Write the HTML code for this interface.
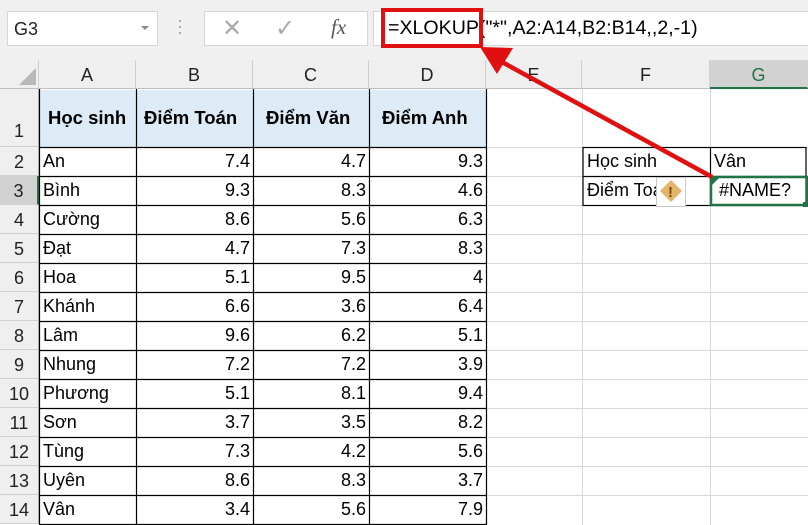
<!DOCTYPE html>
<html><head><meta charset="utf-8"><style>
body{margin:0;width:808px;height:525px;overflow:hidden;background:#fff;font-family:"Liberation Sans",sans-serif;position:relative}
div{position:absolute;box-sizing:border-box}
.t{white-space:nowrap;font-size:18px;color:#000}
.ch{top:60px;height:29px;background:#efefef;border-right:1px solid #d0d0d0;border-bottom:1px solid #bdbdbd;text-align:center;font-size:18px;line-height:30px;color:#222}
.rh{left:0;width:39px;background:#efefef;border-bottom:1px solid #d0d0d0;border-right:1px solid #bdbdbd;text-align:center;font-size:18px;color:#222}
</style></head><body>
<div style="left:0;top:0;width:808px;height:60px;background:#f0f0f0"></div>
<div style="left:7px;top:11px;width:151px;height:35px;background:#fff;border:1px solid #d6d6d6"></div>
<div class="t" style="left:14px;top:19px;color:#222">G3</div>
<div style="left:141px;top:26px;border-left:4px solid transparent;border-right:4px solid transparent;border-top:4px solid #888"></div>
<div style="left:179px;top:20px;width:2px;height:2px;background:#aaa;box-shadow:0 6px #aaa,0 12px #aaa"></div>
<div style="left:204px;top:11px;width:164px;height:35px;background:#fff;border:1px solid #d6d6d6"></div>
<div class="t" style="left:222px;top:14px;font-size:24px;color:#aaa">✕</div>
<div class="t" style="left:275px;top:14px;font-size:24px;color:#aaa">✓</div>
<div class="t" style="left:331px;top:15px;font-family:'Liberation Serif',serif;font-style:italic;font-size:21px;color:#555">fx</div>
<div style="left:373px;top:11px;width:435px;height:35px;background:#fff;border:1px solid #d6d6d6;border-right:none"></div>
<div class="t" style="left:388px;top:17px;font-size:19.6px">=XLOKUP("*",A2:A14,B2:B14,,2,-1)</div>
<div style="left:381px;top:8px;width:102px;height:40px;border:4px solid #e01010"></div>

<div class="ch" style="left:0;width:39px"></div>
<div style="left:19px;top:68px;border-left:17px solid transparent;border-bottom:17px solid #b8b8b8"></div>
<div class="ch" style="left:39px;width:97px">A</div>
<div class="ch" style="left:136px;width:117px">B</div>
<div class="ch" style="left:253px;width:116px">C</div>
<div class="ch" style="left:369px;width:117px">D</div>
<div class="ch" style="left:486px;width:96px">E</div>
<div class="ch" style="left:582px;width:128px">F</div>
<div class="ch" style="left:710px;width:98px;background:#d2d2d2;border-bottom:2px solid #217346;color:#217346">G</div>

<div class="rh" style="top:89px;height:58px;line-height:84px">1</div>
<div id="rows"></div>

<svg style="position:absolute;left:0;top:0" width="808" height="525">
<g stroke="#d9d9d9" stroke-width="1">
<line x1="582.5" y1="89" x2="582.5" y2="525"/><line x1="710.5" y1="89" x2="710.5" y2="525"/>
<line x1="486" y1="147.5" x2="808" y2="147.5"/>
<line x1="486" y1="176.5" x2="808" y2="176.5"/><line x1="486" y1="205.5" x2="808" y2="205.5"/>
<line x1="486" y1="234.5" x2="808" y2="234.5"/><line x1="486" y1="263.5" x2="808" y2="263.5"/>
<line x1="486" y1="292.5" x2="808" y2="292.5"/><line x1="486" y1="321.5" x2="808" y2="321.5"/>
<line x1="486" y1="350.5" x2="808" y2="350.5"/><line x1="486" y1="379.5" x2="808" y2="379.5"/>
<line x1="486" y1="408.5" x2="808" y2="408.5"/><line x1="486" y1="437.5" x2="808" y2="437.5"/>
<line x1="486" y1="466.5" x2="808" y2="466.5"/><line x1="486" y1="495.5" x2="808" y2="495.5"/>
</g>
<rect x="40" y="90" width="446" height="57" fill="#ddebf7"/>
<g stroke="#000" stroke-width="1.2">
<line x1="39.5" y1="89" x2="39.5" y2="525"/><line x1="136.5" y1="89" x2="136.5" y2="525"/>
<line x1="253.5" y1="89" x2="253.5" y2="525"/><line x1="369.5" y1="89" x2="369.5" y2="525"/>
<line x1="486.5" y1="89" x2="486.5" y2="525"/>
<line x1="39" y1="147.5" x2="486" y2="147.5"/><line x1="39" y1="176.5" x2="486" y2="176.5"/>
<line x1="39" y1="205.5" x2="486" y2="205.5"/><line x1="39" y1="234.5" x2="486" y2="234.5"/>
<line x1="39" y1="263.5" x2="486" y2="263.5"/><line x1="39" y1="292.5" x2="486" y2="292.5"/>
<line x1="39" y1="321.5" x2="486" y2="321.5"/><line x1="39" y1="350.5" x2="486" y2="350.5"/>
<line x1="39" y1="379.5" x2="486" y2="379.5"/><line x1="39" y1="408.5" x2="486" y2="408.5"/>
<line x1="39" y1="437.5" x2="486" y2="437.5"/><line x1="39" y1="466.5" x2="486" y2="466.5"/>
<line x1="39" y1="495.5" x2="486" y2="495.5"/><line x1="39" y1="524.5" x2="486" y2="524.5"/>
<rect x="583" y="147.5" width="223" height="58" fill="none"/>
<line x1="583" y1="176.5" x2="806" y2="176.5"/><line x1="710.5" y1="147" x2="710.5" y2="206"/>
</g>
<rect x="711" y="177" width="96" height="28" fill="none" stroke="#217346" stroke-width="2.5"/>
<rect x="803" y="202" width="5" height="5" fill="#217346"/>
<polygon points="712,178 719,178 712,185" fill="#217346"/>
<rect x="656.5" y="177.5" width="29" height="29" fill="#fff" stroke="#c8c8c8"/>
<polygon points="671,180 682,191 671,202 660,191" fill="#e3b46a"/>
<text x="668" y="197" font-family="Liberation Sans" font-weight="bold" font-size="15" fill="#7a4a10">!</text>
<line x1="712" y1="177" x2="502" y2="62" stroke="#e01010" stroke-width="4.5"/>
<polygon points="480,47 513,48 497,74" fill="#e01010"/>
</svg>

<div class="t" style="left:48px;top:107px;font-weight:bold;font-size:18.5px">Học sinh</div>
<div class="t" style="left:144px;top:107px;font-weight:bold;font-size:18.5px">Điểm Toán</div>
<div class="t" style="left:266px;top:107px;font-weight:bold;font-size:18.5px">Điểm Văn</div>
<div class="t" style="left:382px;top:107px;font-weight:bold;font-size:18.5px">Điểm Anh</div>

<div class="t" style="left:587px;top:151px">Học sinh</div>
<div class="t" style="left:714px;top:151px">Vân</div>
<div class="t" style="left:587px;top:180px;width:69px;overflow:hidden">Điểm Toán</div>
<div class="t" style="left:719px;top:180px">#NAME?</div>

<script>
var d=[["An",7.4,4.7,9.3],["Bình",9.3,8.3,4.6],["Cường",8.6,5.6,6.3],["Đạt",4.7,7.3,8.3],["Hoa",5.1,9.5,4],["Khánh",6.6,3.6,6.4],["Lâm",9.6,6.2,5.1],["Nhung",7.2,7.2,3.9],["Phương",5.1,8.1,9.4],["Sơn",3.7,3.5,8.2],["Tùng",7.3,4.2,5.6],["Uyên",8.6,8.3,3.7],["Vân",3.4,5.6,7.9]];
var h="";
for(var i=0;i<13;i++){var y=147+i*29;
var sel=(i==1);
h+='<div class="rh" style="top:'+y+'px;height:29px;line-height:30px;'+(sel?'background:#d2d2d2;border-right:2px solid #217346;':'')+'">'+(i+2)+'</div>';
h+='<div class="t" style="left:43px;top:'+(y+4)+'px">'+d[i][0]+'</div>';
var r=[133,250,366,483];
for(var j=1;j<4;j++)h+='<div class="t" style="right:'+(808-r[j])+'px;top:'+(y+4)+'px">'+d[i][j]+'</div>';
}
document.getElementById("rows").outerHTML=h;
</script>
</body></html>
